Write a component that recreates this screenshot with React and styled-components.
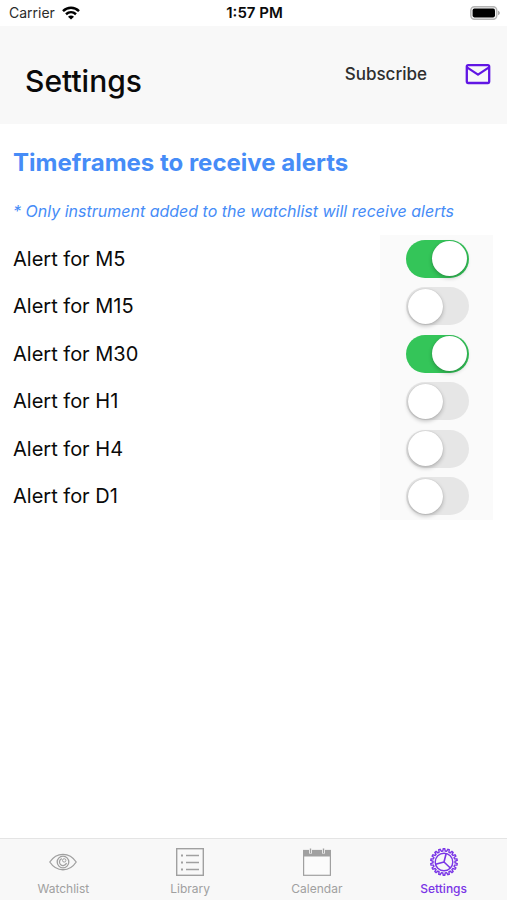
import React, { useState } from "react";
import styled, { createGlobalStyle } from "styled-components";

const GlobalStyle = createGlobalStyle`
  * { box-sizing: border-box; }
  body { margin: 0; background: #fff; }
  body, button, input { font-family: Inter, "Liberation Sans", sans-serif; }
`;

const Screen = styled.div`
  min-height: 100vh;
  display: flex;
  flex-direction: column;
  color: #0a0a0a;
`;

const StatusBar = styled.div`
  height: 26px;
  padding: 0 7px 0 9px;
  display: grid;
  grid-template-columns: 1fr auto 1fr;
  align-items: center;
  font-size: 14px;
  line-height: 26px;
`;

const Carrier = styled.span`
  display: flex;
  align-items: center;
  gap: 7px;
  color: #2b2b2b;
`;

const Clock = styled.time`
  font-size: 15px;
  font-weight: 600;
`;

const BatterySlot = styled.span`
  display: flex;
  justify-content: flex-end;
`;

const Header = styled.header`
  height: 98px;
  padding: 12px 16px 0 25px;
  display: flex;
  align-items: center;
  background: #f8f8f8;
`;

const Title = styled.h1`
  margin: 0 auto 0 0;
  font-size: 30px;
  line-height: 36px;
  font-weight: 500;
  color: #0a0a0a;
`;

const HeaderActions = styled.div`
  display: flex;
  align-items: center;
  gap: 38px;
  padding-bottom: 14px;
`;

const PlainButton = styled.button`
  display: flex;
  padding: 0;
  border: 0;
  background: none;
  font-size: 17px;
  font-weight: 500;
  line-height: 24px;
  color: #2e2e2e;
  cursor: pointer;
`;

const Content = styled.main`
  flex: 1;
  padding: 23px 14px 0 13px;
`;

const SectionTitle = styled.h2`
  margin: 0;
  font-size: 24px;
  line-height: 32px;
  font-weight: 700;
  color: #468cf7;
`;

const Hint = styled.p`
  margin: 21px 0 13px;
  font-size: 16px;
  line-height: 22px;
  font-style: italic;
  color: #468cf7;
`;

const AlertList = styled.div`
  display: grid;
  grid-auto-rows: 1fr;
  min-height: 285px;
`;

const AlertRow = styled.div`
  display: grid;
  grid-template-columns: 1fr 113px;
  align-items: stretch;
`;

const AlertLabel = styled.label`
  align-self: center;
  font-size: 20px;
  line-height: 28px;
`;

const SwitchCell = styled.div`
  display: flex;
  align-items: center;
  justify-content: center;
  background: #fafafa;
`;

const Switch = styled.input`
  appearance: none;
  width: 63px;
  height: 38px;
  margin: 0 0 0 2px;
  padding: 1px 2px;
  display: flex;
  align-items: center;
  border-radius: 19px;
  background: #e6e6e6;
  cursor: pointer;

  &::before {
    content: "";
    width: 35px;
    height: 35px;
    border-radius: 50%;
    background: #fff;
    box-shadow: 0 2px 4px rgba(0, 0, 0, 0.24), 0 0 1px rgba(0, 0, 0, 0.2);
  }

  &:checked {
    justify-content: flex-end;
    background: #34c559;
  }
`;

const TabBar = styled.nav`
  height: 62px;
  display: grid;
  grid-template-columns: repeat(4, 1fr);
  background: #f8f8f8;
  border-top: 1px solid #e4e4e4;
`;

const Tab = styled.a`
  display: flex;
  flex-direction: column;
  align-items: center;
  gap: 4px;
  padding-top: 9px;
  font-size: 12px;
  line-height: 18px;
  text-decoration: none;
  font-weight: ${(p) => (p.$active ? 500 : 400)};
  color: ${(p) => (p.$active ? "#7a35e6" : "#a0a0a0")};
`;

const WifiIcon = () => (
  <svg width="18" height="14" viewBox="0 0 18 14" fill="none" stroke="#000" strokeWidth="2.5" aria-hidden="true">
    <path d="M1 5.1C5.6.7 12.4.7 17 5.1" />
    <path d="M4 8.3c3-2.7 7-2.7 10 0" />
    <path d="M9 13.6 6 10.7c1.8-1.6 4.2-1.6 6 0z" fill="#000" stroke="none" />
  </svg>
);

const BatteryIcon = () => (
  <svg width="30" height="14" viewBox="0 0 30 14" aria-hidden="true">
    <rect x=".8" y=".8" width="26" height="12.4" rx="3.6" fill="#f4f4f4" stroke="#b4b4b4" strokeWidth="1.4" />
    <rect x="2.6" y="2.6" width="22.4" height="8.8" rx="1.8" fill="#000" />
    <path d="M28.2 4.8c2 .7 2 3.7 0 4.4z" fill="#999" />
  </svg>
);

const MailIcon = () => (
  <svg width="26" height="22" viewBox="0 0 26 22" fill="none" stroke="#6116e4" strokeWidth="2.3" strokeLinejoin="round" aria-hidden="true">
    <rect x="1.8" y="2.2" width="22.4" height="17.8" rx="1.4" />
    <path d="M2 4.4 13 11.6 24 4.4" />
  </svg>
);

const EyeIcon = () => (
  <svg width="28" height="28" viewBox="0 0 28 28" fill="none" stroke="currentColor" strokeWidth="1.3" aria-hidden="true">
    <path d="M.8 14C7.5 3.7 20.5 3.7 27.2 14 20.5 24.3 7.5 24.3.8 14z" />
    <circle cx="14" cy="14" r="5.8" />
    <path d="M12.8 10.6a3.6 3.6 0 1 0 4.7 4.4" />
    <circle cx="15.2" cy="12.4" r="1.7" strokeWidth="1" />
  </svg>
);

const ListIcon = () => (
  <svg width="28" height="28" viewBox="0 0 28 28" fill="none" stroke="currentColor" strokeWidth="1.4" aria-hidden="true">
    <rect x=".7" y=".7" width="26.6" height="26.6" />
    <path d="M10 7.5h13M10 14.5h13M10 21.5h13" />
    <path d="M5 7.5h2M5 14.5h2M5 21.5h2" strokeWidth="2" />
  </svg>
);

const CalendarIcon = () => (
  <svg width="28" height="28" viewBox="0 0 28 28" fill="none" stroke="currentColor" aria-hidden="true">
    <rect x=".6" y="2.5" width="26.8" height="24.8" fill="#fbfbfb" strokeWidth="1.2" />
    <path d="M0 2h28v6.5H0z" fill="currentColor" stroke="none" />
    <path d="M7.5 1v4.5M20.5 1v4.5" stroke="#f8f8f8" strokeWidth="3" />
    <path d="M7.5.5v4.5M20.5.5v4.5" strokeWidth="1.4" />
  </svg>
);

const TEETH = 18;
const polar = (radius, turn) => {
  const angle = turn * Math.PI * 2;
  return `${(14 + radius * Math.sin(angle)).toFixed(2)} ${(14 - radius * Math.cos(angle)).toFixed(2)}`;
};
const gearOutline =
  "M" +
  Array.from({ length: TEETH }, (_, i) =>
    [
      [11, -0.32],
      [13.3, -0.16],
      [13.3, 0.16],
      [11, 0.32],
    ]
      .map(([radius, offset]) => polar(radius, (i + offset) / TEETH))
      .join("L")
  ).join("L") +
  "Z";

const GearIcon = () => (
  <svg width="28" height="28" viewBox="0 0 28 28" fill="none" stroke="currentColor" strokeWidth="1.4" aria-hidden="true">
    <path d={gearOutline} />
    <circle cx="14" cy="14" r="8.8" />
    <path d={`M14 14L${polar(8.7, 0.04)}M14 14L${polar(8.7, 0.37)}M14 14L${polar(8.7, 0.71)}`} strokeWidth="1.6" />
  </svg>
);

const tabs = [
  { name: "Watchlist", Icon: EyeIcon },
  { name: "Library", Icon: ListIcon },
  { name: "Calendar", Icon: CalendarIcon },
  { name: "Settings", Icon: GearIcon, active: true },
];

const timeframes = ["M5", "M15", "M30", "H1", "H4", "D1"];

export default function App() {
  const [enabled, setEnabled] = useState({ M5: true, M30: true });
  const toggle = (frame) => setEnabled((state) => ({ ...state, [frame]: !state[frame] }));

  return (
    <Screen>
      <GlobalStyle />
      <StatusBar>
        <Carrier>
          Carrier <WifiIcon />
        </Carrier>
        <Clock>1:57 PM</Clock>
        <BatterySlot>
          <BatteryIcon />
        </BatterySlot>
      </StatusBar>
      <Header>
        <Title>Settings</Title>
        <HeaderActions>
          <PlainButton type="button">Subscribe</PlainButton>
          <PlainButton type="button" aria-label="Messages">
            <MailIcon />
          </PlainButton>
        </HeaderActions>
      </Header>
      <Content>
        <SectionTitle>Timeframes to receive alerts</SectionTitle>
        <Hint>* Only instrument added to the watchlist will receive alerts</Hint>
        <AlertList>
          {timeframes.map((frame) => (
            <AlertRow key={frame}>
              <AlertLabel htmlFor={`alert-${frame}`}>Alert for {frame}</AlertLabel>
              <SwitchCell>
                <Switch
                  id={`alert-${frame}`}
                  type="checkbox"
                  role="switch"
                  checked={Boolean(enabled[frame])}
                  onChange={() => toggle(frame)}
                />
              </SwitchCell>
            </AlertRow>
          ))}
        </AlertList>
      </Content>
      <TabBar>
        {tabs.map(({ name, Icon, active }) => (
          <Tab key={name} href={`#${name.toLowerCase()}`} $active={active} aria-current={active ? "page" : undefined}>
            <Icon />
            {name}
          </Tab>
        ))}
      </TabBar>
    </Screen>
  );
}
